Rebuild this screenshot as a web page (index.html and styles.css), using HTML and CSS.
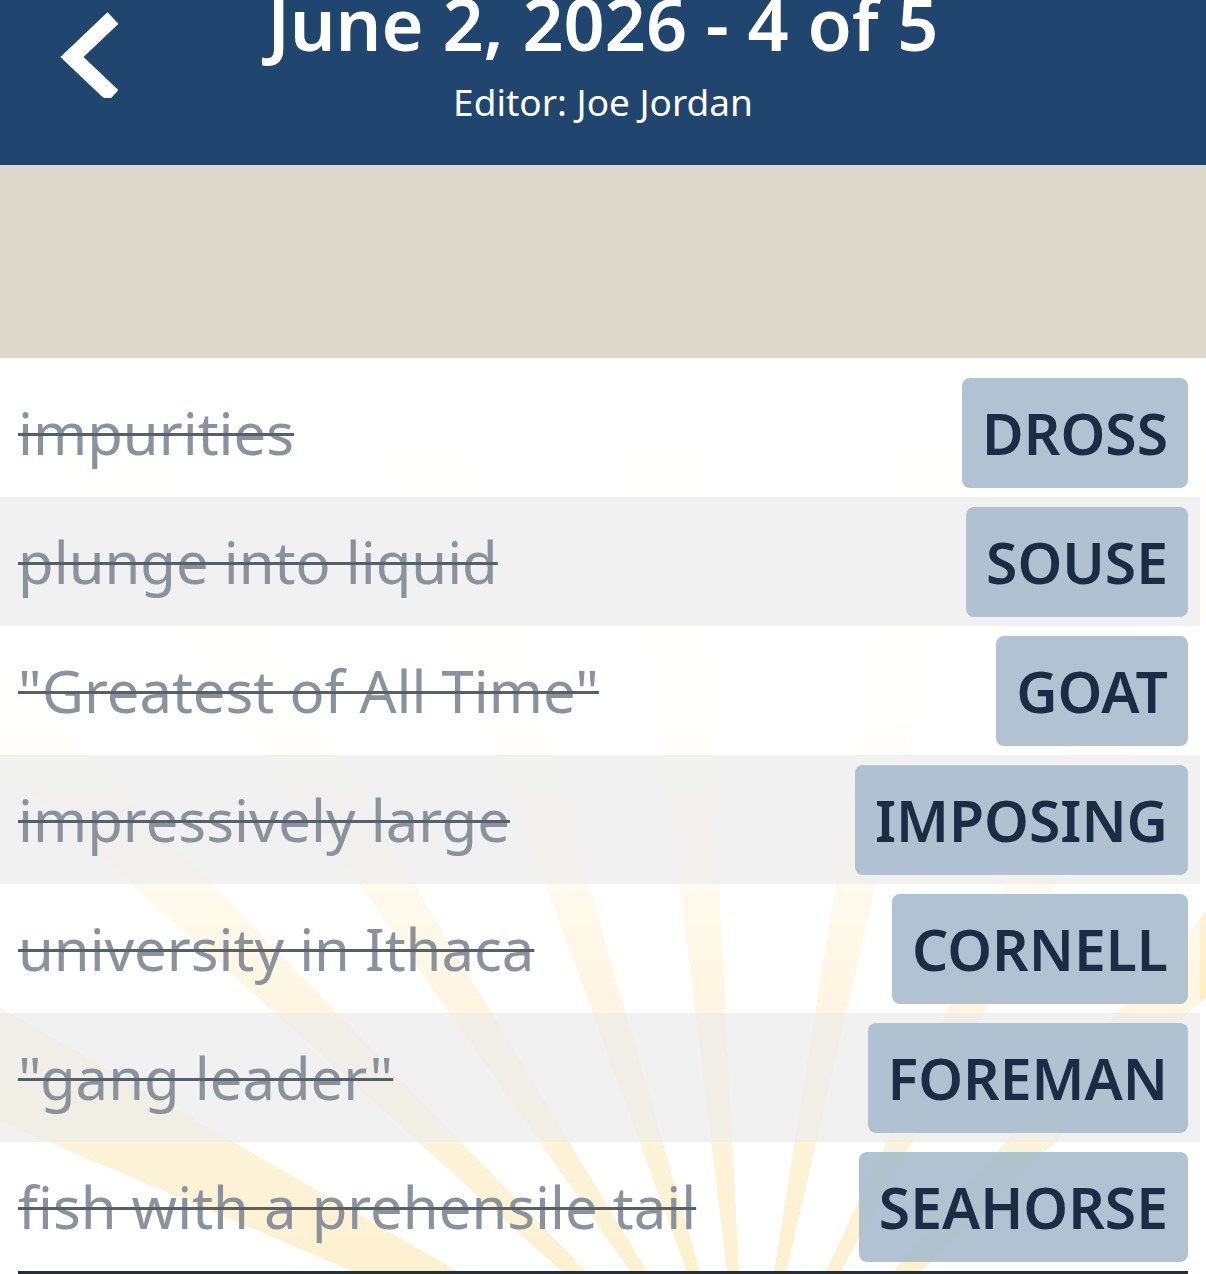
FILE: index.html
```html
<!DOCTYPE html>
<html lang="en">
<head>
    <meta charset="UTF-8">
    <meta name="viewport" content="width=device-width, initial-scale=1.0">
    <title>June 2, 2026 - 4 of 5</title>
    <link rel="stylesheet" href="styles.css">
</head>
<body>

<header class="topbar">
    <a class="back" href="#" aria-label="Back">
        <svg width="60" height="92" viewBox="0 0 60 92">
            <polyline points="55,12 14,51 55,90" fill="none" stroke="#fff" stroke-width="16" stroke-linejoin="miter"/>
        </svg>
    </a>
    <h1 class="title">June 2, 2026 - 4 of 5</h1>
    <p class="editor">Editor: Joe Jordan</p>
</header>

<div class="band"></div>

<!-- Solved clues -->
<div class="list">
    <div class="row">
        <span class="clue">impurities</span>
        <span class="answer">DROSS</span>
    </div>
    <div class="row alt">
        <span class="clue">plunge into liquid</span>
        <span class="answer">SOUSE</span>
    </div>
    <div class="row">
        <span class="clue">"Greatest of All Time"</span>
        <span class="answer">GOAT</span>
    </div>
    <div class="row alt">
        <span class="clue">impressively large</span>
        <span class="answer">IMPOSING</span>
    </div>
    <div class="row">
        <span class="clue">university in Ithaca</span>
        <span class="answer">CORNELL</span>
    </div>
    <div class="row alt">
        <span class="clue">"gang leader"</span>
        <span class="answer">FOREMAN</span>
    </div>
    <div class="row">
        <span class="clue">fish with a prehensile tail</span>
        <span class="answer">SEAHORSE</span>
    </div>
    <div class="next"></div>
</div>

</body>
</html>
```

FILE: styles.css
```css
body {
    margin: 0;
    font-family: "Noto Sans", Lato, sans-serif;
    background: #fff;
    overflow: hidden;
}

.topbar {
    position: relative;
    height: 165px;
    background-color: #20466f;
    color: #fff;
    text-align: center;
    overflow: hidden;
}

.back {
    position: absolute;
    left: 58px;
    top: 6px;
}

.title {
    margin: -29px 0 0 0;
    font-size: 72px;
    font-weight: 600;
    line-height: 104px;
}

.editor {
    margin: 2px 0 0 0;
    font-size: 37px;
    line-height: 50px;
}

.band {
    height: 193px;
    background-color: #ddd8cc;
}

.list {
    padding-top: 10px;
    background-image:
        linear-gradient(to bottom, #fff 0%, rgba(255, 255, 255, 0.95) 40%, rgba(255, 255, 255, 0.35) 72%, rgba(255, 255, 255, 0) 100%),
        conic-gradient(from -75deg at 62% 118%,
            #fff 0deg 8deg,
            #fbe2a0 8deg 15deg,
            #fff 15deg 27deg,
            #fbe2a0 27deg 31deg,
            #fff 31deg 40deg,
            #fbe2a0 40deg 44deg,
            #fff 44deg 55deg,
            #fbe2a0 55deg 59deg,
            #fff 59deg 68deg,
            #fbe2a0 68deg 72deg,
            #fff 72deg 84deg,
            #fbe2a0 84deg 88deg,
            #fff 88deg 100deg,
            #fbe2a0 100deg 104deg,
            #fff 104deg 116deg,
            #fbe2a0 116deg 121deg,
            #fff 121deg 360deg);
}

.row {
    display: flex;
    align-items: center;
    justify-content: space-between;
    height: 129px;
    margin-right: 6px;
    padding: 0 12px 0 18px;
    background: rgba(255, 255, 255, 0.5);
}

.row.alt {
    background: rgba(238, 238, 238, 0.85);
}

.clue {
    font-size: 58px;
    color: #8a939c;
    text-decoration: line-through;
    text-decoration-color: #56606b;
    text-decoration-thickness: 3px;
}

.answer {
    display: flex;
    align-items: center;
    height: 110px;
    padding: 0 20px;
    border-radius: 8px;
    background: rgba(170, 190, 206, 0.92);
    color: #1b2d45;
    font-size: 57px;
    font-weight: 600;
}

.next {
    margin: 0 18px;
    border-top: 3px solid #1f2f44;
}
```
